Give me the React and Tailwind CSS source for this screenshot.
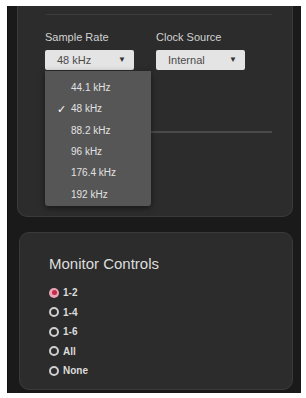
import { useState } from 'react'

const rates = ['44.1 kHz', '48 kHz', '88.2 kHz', '96 kHz', '176.4 kHz', '192 kHz']
const monitors = ['1-2', '1-4', '1-6', 'All', 'None']

function Select({ value, width }) {
  return (
    <div
      className={`${width} h-[20px] bg-[#e4e4e4] rounded-[2px] flex items-center justify-between pl-[12px] pr-[8px] text-[11px] text-[#4a4a4a]`}
    >
      <span>{value}</span>
      <span className="text-[8px] text-[#333]">▼</span>
    </div>
  )
}

function Radio({ label, checked }) {
  return (
    <div className="flex items-center gap-[4px] h-[19.5px]">
      {checked ? (
        <span className="w-[10px] h-[10px] rounded-full bg-[#e9a6b6] flex items-center justify-center">
          <span className="w-[5px] h-[5px] rounded-full bg-[#c8284c]" />
        </span>
      ) : (
        <span className="w-[10px] h-[10px] rounded-full border-[2px] border-[#cfcfcf]" />
      )}
      <span className="text-[10px] text-[#dcdcdc] font-bold">{label}</span>
    </div>
  )
}

export default function App() {
  const [rate] = useState('48 kHz')

  return (
    <div className="w-[306px] h-[398px] bg-white pt-[6px] pl-[7px] font-['Liberation_Sans',Arial,sans-serif]">
      <div className="w-[294px] h-[387px] bg-[#1a1a1a] border-l border-[#111] pl-[9px] pr-[8px]">
        {/* audio settings panel */}
        <div className="relative h-[211px] bg-[#2c2c2c] rounded-b-[10px] border border-t-0 border-[#3a3a3a] pt-[8px]">
          <div className="ml-[28px] mr-[20px] h-px bg-[#3d3d3d]" />
          <div className="flex gap-[22px] ml-[27px] mt-[15px]">
            <div className="flex flex-col gap-[6px]">
              <span className="text-[11px] text-[#d2d2d2] leading-[14px]">Sample Rate</span>
              <Select value={rate} width="w-[89px]" />
            </div>
            <div className="flex flex-col gap-[6px]">
              <span className="text-[11px] text-[#d2d2d2] leading-[14px]">Clock Source</span>
              <Select value="Internal" width="w-[89px]" />
            </div>
          </div>
          <div className="ml-[27px] mr-[20px] mt-[61px] h-[2px] bg-[#4a4a4a]" />

          {/* open dropdown */}
          <div className="absolute left-[27px] top-[65px] w-[106px] h-[135px] bg-[#565656] rounded-b-[3px] shadow-[0_2px_6px_rgba(0,0,0,0.5)] pt-[6px]">
            {rates.map((r) => (
              <div key={r} className="h-[21.3px] flex items-center text-[10px] text-[#e2e2e2]">
                <span className="w-[26px] pl-[12px] text-[11px] text-white">{r === rate ? '✓' : ''}</span>
                <span>{r}</span>
              </div>
            ))}
          </div>
        </div>

        {/* monitor panel */}
        <div className="mt-[15px] ml-[2px] h-[158px] bg-[#2c2c2c] rounded-[10px] border border-[#3a3a3a] pl-[29px] pt-[22px]">
          <div className="text-[15px] text-[#dedede] leading-[18px] mb-[10px]">Monitor Controls</div>
          <div className="flex flex-col">
            {monitors.map((m, i) => (
              <Radio key={m} label={m} checked={i === 0} />
            ))}
          </div>
        </div>
      </div>
    </div>
  )
}
